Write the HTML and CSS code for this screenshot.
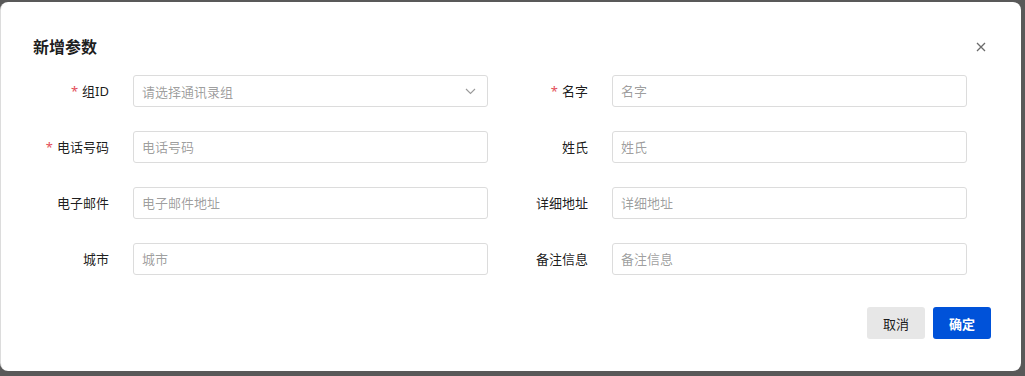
FILE: index.html
```html
<!DOCTYPE html>
<html lang="zh-CN">
<head>
    <meta charset="UTF-8">
    <meta name="viewport" content="width=device-width, initial-scale=1.0">
    <title>新增参数</title>
    <link rel="stylesheet" href="styles.css">
</head>
<body>

    <div class="dialog">
        <div class="dialog-header">
            <h3 class="dialog-title">新增参数</h3>
            <span class="close-button">
                <svg width="10" height="10" viewBox="0 0 10 10"><path d="M1 1L9 9M9 1L1 9" stroke="#6b6b6b" stroke-width="1.3" fill="none"/></svg>
            </span>
        </div>

        <form class="form">
            <div class="form-item">
                <label class="form-label"><span class="required">*</span>组ID</label>
                <div class="select">
                    <span class="placeholder">请选择通讯录组</span>
                    <svg class="chevron" width="11" height="7" viewBox="0 0 11 7"><path d="M1 1L5.5 5.5L10 1" stroke="#9a9a9a" stroke-width="1.1" fill="none"/></svg>
                </div>
            </div>
            <div class="form-item">
                <label class="form-label"><span class="required">*</span>名字</label>
                <input class="input" type="text" placeholder="名字">
            </div>

            <div class="form-item">
                <label class="form-label"><span class="required">*</span>电话号码</label>
                <input class="input" type="text" placeholder="电话号码">
            </div>
            <div class="form-item">
                <label class="form-label">姓氏</label>
                <input class="input" type="text" placeholder="姓氏">
            </div>

            <div class="form-item">
                <label class="form-label">电子邮件</label>
                <input class="input" type="text" placeholder="电子邮件地址">
            </div>
            <div class="form-item">
                <label class="form-label">详细地址</label>
                <input class="input" type="text" placeholder="详细地址">
            </div>

            <div class="form-item">
                <label class="form-label">城市</label>
                <input class="input" type="text" placeholder="城市">
            </div>
            <div class="form-item">
                <label class="form-label">备注信息</label>
                <input class="input" type="text" placeholder="备注信息">
            </div>
        </form>

        <div class="dialog-footer">
            <button class="btn btn-cancel">取消</button>
            <button class="btn btn-confirm">确定</button>
        </div>
    </div>

</body>
</html>
```

FILE: styles.css
```css
html, body {
    height: 100%;
}

body {
    margin: 0;
    font-family: 'Noto Sans', 'Noto Sans CJK SC', sans-serif;
    background-color: #595959; /* dark mask behind dialog */
    color: rgba(0, 0, 0, 0.9);
    box-sizing: border-box;
    padding: 2px 4px 5px 0;
}

.dialog {
    height: 100%;
    box-sizing: border-box;
    background-color: #fff;
    border-left: 1px solid #dcdcdc;
    border-radius: 8px;
    padding: 33px 30px 32px 32px;
    display: flex;
    flex-direction: column;
}

.dialog-header {
    display: flex;
    align-items: center;
    justify-content: space-between;
    height: 24px;
}

.dialog-title {
    margin: 0;
    font-size: 16px;
    font-weight: bold;
    line-height: 24px;
}

.close-button {
    display: flex;
    margin-right: 5px;
}

.form {
    display: grid;
    grid-template-columns: 455px 455px;
    column-gap: 24px;
    row-gap: 24px;
    margin-top: 16px;
}

.form-item {
    display: flex;
    align-items: center;
    gap: 24px;
}

.form-label {
    width: 76px;
    flex-shrink: 0;
    text-align: right;
    font-size: 13px;
    padding-bottom: 1px;
}

.required {
    color: #e34d59;
    margin-right: 4px;
}

.input,
.select {
    flex: 1;
    min-width: 0;
    height: 32px;
    box-sizing: border-box;
    border: 1px solid #dcdcdc;
    border-radius: 3px;
    padding: 0 8px;
    font-family: inherit;
    font-size: 13px;
    color: rgba(0, 0, 0, 0.9);
    outline: none;
}

.input::placeholder,
.placeholder {
    color: rgba(0, 0, 0, 0.4);
}

.select {
    display: flex;
    align-items: center;
    justify-content: space-between;
    padding-right: 11px;
}

.dialog-footer {
    margin-top: auto;
    display: flex;
    justify-content: flex-end;
    gap: 8px;
}

.btn {
    height: 32px;
    width: 58px;
    border: none;
    border-radius: 3px;
    font-family: inherit;
    font-size: 13px;
    cursor: pointer;
}

.btn-cancel {
    background-color: #e7e7e7;
    color: rgba(0, 0, 0, 0.9);
}

.btn-confirm {
    background-color: #0052d9;
    color: #fff;
    font-weight: bold;
}
```
